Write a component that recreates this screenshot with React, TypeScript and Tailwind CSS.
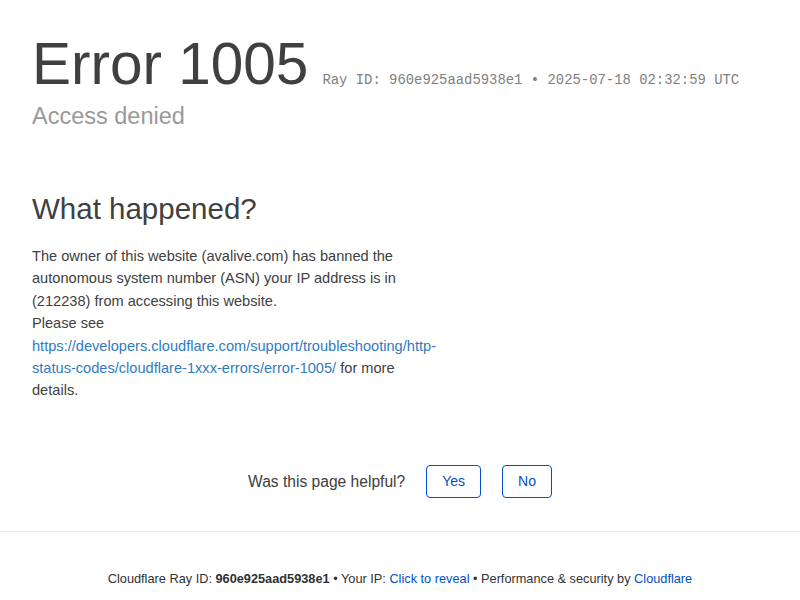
export default function App() {
  return (
    <div className="min-h-[600px] bg-white text-[#404040] font-['Liberation_Sans',Arial,sans-serif]">
      {/* Heading */}
      <div className="px-8 pt-[34px]">
        <h1 className="flex items-baseline text-[58.5px] leading-[60px] font-normal text-[#404040]">
          <span>Error 1005</span>
          <small className="ml-[14px] whitespace-nowrap font-['Liberation_Mono',monospace] text-[13.9px] leading-none text-[#808080]">
            Ray ID: 960e925aad5938e1 &bull; 2025-07-18 02:32:59 UTC
          </small>
        </h1>
        <h2 className="mt-[7px] text-[23.5px] leading-[30px] text-[#999999]">Access denied</h2>
      </div>

      {/* What happened */}
      <section className="px-8 mt-[58px]">
        <div className="w-[410px]">
          <h2 className="text-[29.5px] leading-[39px] font-normal text-[#404040]">What happened?</h2>
          <p className="mt-[17px] text-[14.6px] leading-[22.4px] text-[#404040]">
            The owner of this website (avalive.com) has banned the autonomous system number (ASN) your IP address is in
            (212238) from accessing this website.
            <br />
            Please see{' '}
            <a href="#" className="text-[#2f7bbf]">
              https://developers.cloudflare.com/support/troubleshooting/http-status-codes/cloudflare-1xxx-errors/error-1005/
            </a>{' '}
            for more details.
          </p>
        </div>
      </section>

      {/* Feedback */}
      <div className="mt-[63px] flex items-center justify-center gap-[21px]">
        <span className="text-[15.6px] text-[#404040]">Was this page helpful?</span>
        <button className="h-[33px] rounded-[4px] border border-[#0051c3] px-[15px] text-[14px] text-[#0051c3]">
          Yes
        </button>
        <button className="h-[33px] rounded-[4px] border border-[#0051c3] px-[15px] text-[14px] text-[#0051c3]">
          No
        </button>
      </div>

      <div className="mt-[33px] border-t border-[#ebebeb]" />

      {/* Footer */}
      <p className="mt-[37px] text-center text-[12.75px] leading-[20px] text-[#313131]">
        Cloudflare Ray ID: <strong className="font-semibold">960e925aad5938e1</strong> &bull; Your IP:{' '}
        <a href="#" className="text-[#0051c3]">Click to reveal</a> &bull; Performance &amp; security by{' '}
        <a href="#" className="text-[#0051c3]">Cloudflare</a>
      </p>
    </div>
  )
}
